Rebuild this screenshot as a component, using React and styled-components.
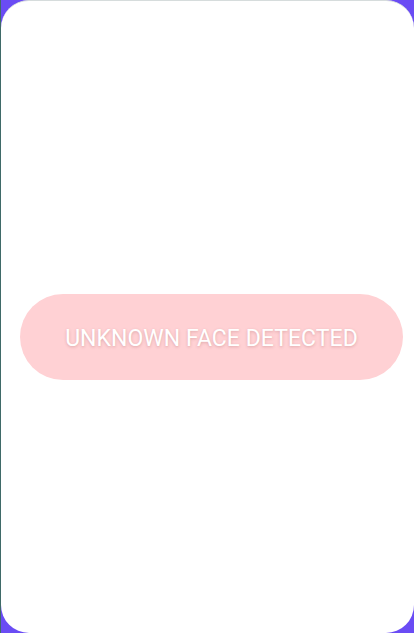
import React from "react";
import styled, { createGlobalStyle } from "styled-components";

const Global = createGlobalStyle`
  html, body { margin: 0; padding: 0; height: 100%; }
  body { background: #6a4cf4; font-family: Roboto, "Noto Sans", sans-serif; }
  #root { height: 100%; }
`;

const Frame = styled.div`
  height: 633px;
  width: 414px;
  display: flex;
  background: #6a4cf4;
  border-left: 1px solid #3f6a68;
  box-sizing: border-box;
`;

const Card = styled.div`
  flex: 1;
  background: #ffffff;
  border-radius: 28px;
  border-top: 1px solid #d6dcdc;
  display: flex;
  align-items: center;
  justify-content: center;
  box-sizing: border-box;
  padding: 39px 11px 0 19px;
`;

const Pill = styled.div`
  flex: 1;
  height: 86px;
  box-sizing: border-box;
  padding-top: 3px;
  border-radius: 43px;
  background: #ffd1d4;
  display: flex;
  align-items: center;
  justify-content: center;
  color: #ffffff;
  font-size: 23px;
  font-weight: 400;
  letter-spacing: 0.05px;
  text-shadow: 0 1px 3px rgba(120, 40, 40, 0.25);
`;

export default function App() {
  return (
    <>
      <Global />
      <Frame>
        <Card>
          <Pill>UNKNOWN FACE DETECTED</Pill>
        </Card>
      </Frame>
    </>
  );
}
